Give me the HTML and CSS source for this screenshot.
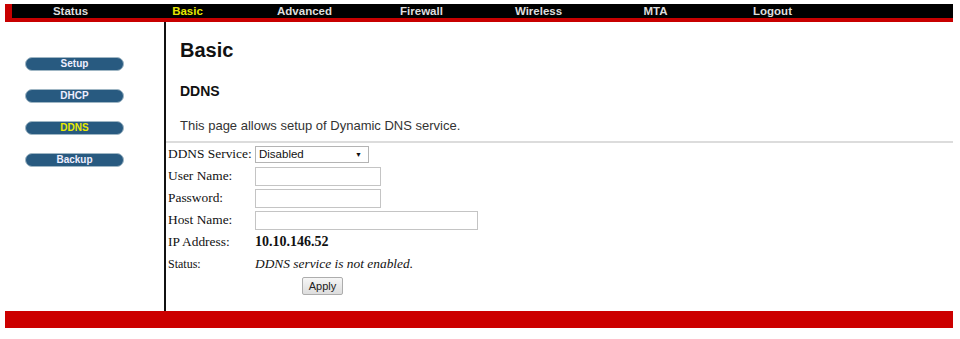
FILE: index.html
```html
<!DOCTYPE html>
<html lang="en">
<head>
    <meta charset="UTF-8">
    <title>Basic - DDNS</title>
    <link rel="stylesheet" href="styles.css">
</head>
<body>
    <div class="page">
        <div class="topnav">
            <div class="topnav-inner">
                <a class="nav-item">Status</a>
                <a class="nav-item active">Basic</a>
                <a class="nav-item">Advanced</a>
                <a class="nav-item">Firewall</a>
                <a class="nav-item">Wireless</a>
                <a class="nav-item">MTA</a>
                <a class="nav-item">Logout</a>
            </div>
        </div>

        <div class="main">
            <div class="sidebar">
                <a class="side-btn">Setup</a>
                <a class="side-btn">DHCP</a>
                <a class="side-btn active">DDNS</a>
                <a class="side-btn">Backup</a>
            </div>

            <div class="content">
                <h1>Basic</h1>
                <h2>DDNS</h2>
                <p class="intro">This page allows setup of Dynamic DNS service.</p>
                <div class="divider"></div>

                <div class="form-grid">
                    <div class="label">DDNS Service:</div>
                    <div class="value">
                        <div class="select">Disabled<span class="arrow">&#9660;</span></div>
                    </div>

                    <div class="label">User Name:</div>
                    <div class="value"><input type="text" class="field"></div>

                    <div class="label">Password:</div>
                    <div class="value"><input type="password" class="field"></div>

                    <div class="label">Host Name:</div>
                    <div class="value"><input type="text" class="field wide"></div>

                    <div class="label">IP Address:</div>
                    <div class="value ip">10.10.146.52</div>

                    <div class="label small">Status:</div>
                    <div class="value status">DDNS service is not enabled.</div>
                </div>

                <div class="apply-row">
                    <button class="apply">Apply</button>
                </div>
            </div>
        </div>

        <div class="footer"></div>
    </div>
</body>
</html>
```

FILE: styles.css
```css
body {
    margin: 0;
    background-color: #fff;
    font-family: "Liberation Sans", Arial, sans-serif;
}

.page {
    width: 948px;
    margin: 4px 0 0 5px;
}

/* barra superior */
.topnav {
    background-color: #c80000;
    padding: 0 0 4px 7px;
}

.topnav-inner {
    display: grid;
    grid-template-columns: repeat(7, 117px);
    height: 14px;
    background-color: #000;
}

.nav-item {
    color: #ddd;
    font-size: 11.5px;
    font-weight: bold;
    line-height: 15px;
    text-align: center;
}

.nav-item.active {
    color: #e6e600;
}

.main {
    display: flex;
    height: 289px;
}

/* menu lateral */
.sidebar {
    width: 161px;
    flex-shrink: 0;
    border-right: 2px solid #111;
    padding: 35px 0 0 20px;
    box-sizing: border-box;
    display: flex;
    flex-direction: column;
    gap: 18px;
}

.side-btn {
    display: block;
    width: 99px;
    height: 14px;
    box-sizing: border-box;
    background-color: #285a80;
    border: 1px solid #9fb6c4;
    border-radius: 7px;
    color: #eef;
    font-size: 10px;
    font-weight: bold;
    line-height: 12px;
    text-align: center;
}

.side-btn.active {
    color: #eaea00;
}

/* conteudo */
.content {
    flex: 1;
}

h1 {
    margin: 16px 0 0 14px;
    font-size: 20px;
    line-height: 24px;
    color: #111;
}

h2 {
    margin: 20px 0 0 14px;
    font-size: 14px;
    line-height: 18px;
    color: #111;
}

.intro {
    margin: 18px 0 0 14px;
    font-size: 13px;
    line-height: 16px;
    color: #333;
}

.divider {
    margin-top: 7px;
    height: 2px;
    background-color: #dcdcdc;
}

.form-grid {
    display: grid;
    grid-template-columns: 87px auto;
    grid-auto-rows: 22px;
    margin: 0 0 0 2px;
    font-family: "Liberation Serif", "Times New Roman", serif;
    font-size: 13.4px;
    color: #111;
}

.label,
.value {
    display: flex;
    align-items: center;
}

.label.small {
    font-size: 12px;
}

.select {
    position: relative;
    width: 114px;
    height: 17px;
    box-sizing: border-box;
    border: 1px solid #b4b4b4;
    padding-left: 3px;
    font-family: "Liberation Sans", Arial, sans-serif;
    font-size: 11.5px;
    line-height: 15px;
    color: #111;
}

.arrow {
    position: absolute;
    right: 6px;
    top: 0;
    font-size: 7px;
}

.field {
    width: 126px;
    height: 19px;
    box-sizing: border-box;
    margin: 0;
    border: 1px solid #c4c4c4;
    padding: 0;
}

.field.wide {
    width: 223px;
}

.ip {
    font-weight: bold;
    font-size: 14px;
}

.status {
    font-style: italic;
}

.apply-row {
    padding: 1px 0 0 136px;
}

.apply {
    width: 41px;
    height: 18px;
    padding: 0;
    border: 1px solid #adadad;
    border-radius: 2px;
    background: linear-gradient(#f6f6f6, #dddddd);
    font-family: "Liberation Sans", Arial, sans-serif;
    font-size: 11px;
    color: #222;
}

.footer {
    height: 17px;
    background-color: #cc0000;
}
```
